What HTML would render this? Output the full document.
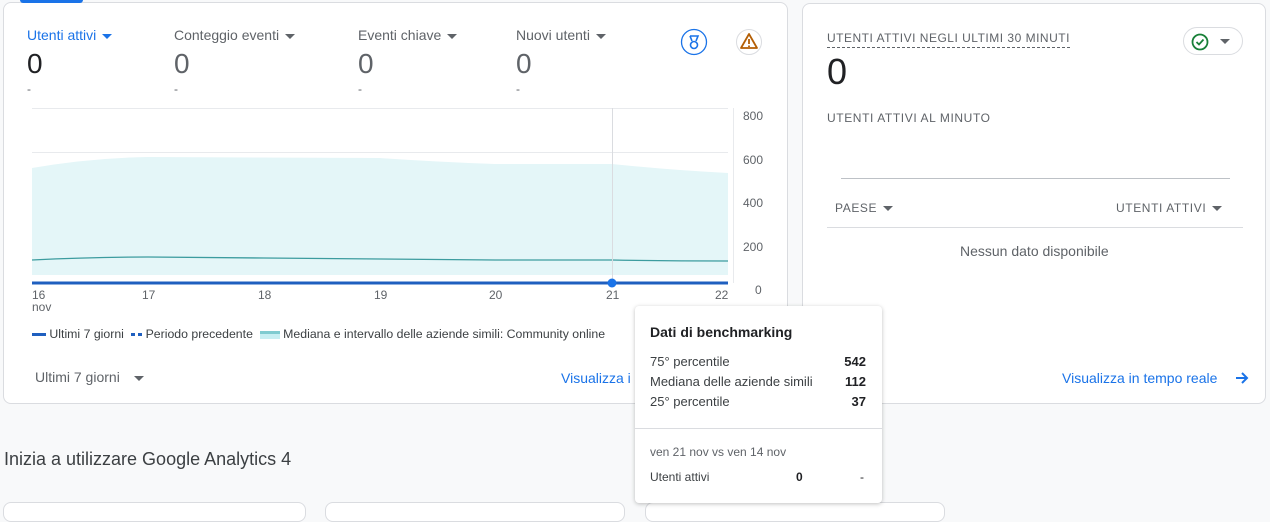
<!DOCTYPE html>
<html><head><meta charset="utf-8"><style>
*{margin:0;padding:0;box-sizing:border-box}
body{width:1270px;height:505px;background:#f8f9fa;font-family:"Liberation Sans",sans-serif;position:relative;overflow:hidden;color:#5f6368}
.a{position:absolute;white-space:nowrap}
.card{position:absolute;background:#fff;border:1px solid #dadce0;border-radius:8px}
.tri{display:inline-block;width:0;height:0;border-left:5px solid transparent;border-right:5px solid transparent;border-top:5px solid #5f6368;vertical-align:middle;margin-left:6px}
.m{font-size:14px;color:#5f6368}
.big{font-size:28px;color:#202124}
.cap{font-size:12px;letter-spacing:.6px;color:#5f6368}
</style></head><body>
<div class="card" style="left:3px;top:2px;width:785px;height:402px"></div>
<div class="a" style="left:20px;top:0;width:63px;height:3px;background:#1a73e8;border-radius:0 0 3px 3px"></div>
<div class="a m" style="left:27px;top:27px;color:#1a73e8">Utenti attivi<span class="tri" style="border-top-color:#1a73e8"></span></div>
<div class="a m" style="left:174px;top:27px">Conteggio eventi<span class="tri"></span></div>
<div class="a m" style="left:358px;top:27px">Eventi chiave<span class="tri"></span></div>
<div class="a m" style="left:516px;top:27px">Nuovi utenti<span class="tri"></span></div>
<div class="a big" style="left:27px;top:48px">0</div>
<div class="a big" style="left:174px;top:48px;color:#5f6368">0</div>
<div class="a big" style="left:358px;top:48px;color:#5f6368">0</div>
<div class="a big" style="left:516px;top:48px;color:#5f6368">0</div>
<div class="a" style="left:27px;top:82px;font-size:12px">-</div>
<div class="a" style="left:174px;top:82px;font-size:12px">-</div>
<div class="a" style="left:358px;top:82px;font-size:12px">-</div>
<div class="a" style="left:516px;top:82px;font-size:12px">-</div>
<svg class="a" style="left:680px;top:28px" width="28" height="28"><circle cx="14" cy="14" r="12.5" fill="#fff" stroke="#1a73e8" stroke-width="1.3"/><path d="M10 8h8l-2 5M10 8l2 5" stroke="#1a73e8" fill="none" stroke-width="1.6"/><circle cx="14" cy="17" r="3.5" stroke="#1a73e8" fill="none" stroke-width="1.6"/></svg>
<svg class="a" style="left:735px;top:28px" width="28" height="28"><circle cx="14" cy="14" r="12.5" fill="#fff" stroke="#dadce0"/><path d="M14 6L6 20h16z" fill="none" stroke="#b45f06" stroke-width="1.8" stroke-linejoin="round"/><path d="M14 11v5M14 17.5v1.5" stroke="#b45f06" stroke-width="1.8"/></svg>
<svg class="a" style="left:0;top:100px" width="790" height="200">
<g stroke="#e8eaed" stroke-width="1"><line x1="32" y1="8.5" x2="728" y2="8.5"/><line x1="32" y1="52.5" x2="728" y2="52.5"/><line x1="32" y1="95.5" x2="728" y2="95.5"/><line x1="32" y1="139.5" x2="728" y2="139.5"/><line x1="733.5" y1="8" x2="733.5" y2="183"/></g>
<path d="M32 68 Q90 58 148 57 L380 58 Q440 62 495 64 L612 64 Q670 70 728 73 L728 175 L32 175Z" fill="#e4f6f8"/>
<path d="M32 160 Q90 157 148 157 L264 158 L380 159 L495 160 L612 160 Q670 161 728 161" fill="none" stroke="#3c9c9f" stroke-width="1.3"/>
<line x1="612.5" y1="8" x2="612.5" y2="183" stroke="#dadce0"/>
<line x1="32" y1="183" x2="728" y2="183" stroke="#1f5fbf" stroke-width="3"/>
<circle cx="612" cy="183" r="4.5" fill="#1a73e8"/>
<g font-size="12" fill="#5f6368" font-family="Liberation Sans"><text x="743" y="20">800</text><text x="743" y="64">600</text><text x="743" y="107">400</text><text x="743" y="151">200</text><text x="755" y="194">0</text>
<text x="32" y="199">16</text><text x="142" y="199">17</text><text x="258" y="199">18</text><text x="374" y="199">19</text><text x="489" y="199">20</text><text x="606" y="199">21</text><text x="715" y="199">22</text></g>
</svg>
<div class="a" style="left:32px;top:300px;font-size:12px">nov</div>
<div class="a" style="left:32px;top:327px;font-size:12.3px;color:#3c4043"><span style="display:inline-block;width:14px;height:3px;background:#1f5fbf;vertical-align:middle"></span> Ultimi 7 giorni &nbsp;<span style="display:inline-block;width:4px;height:3px;background:#1f5fbf;vertical-align:middle"></span> <span style="display:inline-block;width:4px;height:3px;background:#1f5fbf;vertical-align:middle"></span> Periodo precedente &nbsp;<span style="display:inline-block;width:20px;height:8px;background:#c6eef2;border-top:3px solid #7fcbd0;vertical-align:middle"></span> Mediana e intervallo delle aziende simili: Community online</div>
<div class="a m" style="left:35px;top:369px">Ultimi 7 giorni <span class="tri" style="margin-left:10px"></span></div>
<div class="a" style="left:561px;top:370px;font-size:14px;color:#1a73e8">Visualizza i</div>

<div class="card" style="left:802px;top:3px;width:464px;height:401px"></div>
<div class="a cap" style="left:827px;top:31px;letter-spacing:.5px;border-bottom:1px dashed #5f6368;padding-bottom:2px">UTENTI ATTIVI NEGLI ULTIMI 30 MINUTI</div>
<div class="a" style="left:827px;top:51px;font-size:36px;color:#202124">0</div>
<div class="a cap" style="left:827px;top:111px">UTENTI ATTIVI AL MINUTO</div>
<div class="a" style="left:1183px;top:27px;width:60px;height:28px;border:1px solid #dadce0;border-radius:14px"></div>
<svg class="a" style="left:1190px;top:32px" width="20" height="20"><circle cx="10" cy="10" r="7.5" fill="none" stroke="#188038" stroke-width="1.8"/><path d="M6.5 10l2.5 2.5 4.5-5" fill="none" stroke="#188038" stroke-width="1.8"/></svg>
<span class="a tri" style="left:1214px;top:39px"></span>
<div class="a" style="left:841px;top:178px;width:389px;border-top:1px solid #bdc1c6"></div>
<div class="a cap" style="left:835px;top:201px">PAESE<span class="tri"></span></div>
<div class="a cap" style="left:1116px;top:201px">UTENTI ATTIVI<span class="tri"></span></div>
<div class="a" style="left:827px;top:227px;width:416px;border-top:1px solid #dadce0"></div>
<div class="a m" style="left:960px;top:243px">Nessun dato disponibile</div>
<div class="a" style="left:1062px;top:370px;font-size:14px;color:#1a73e8">Visualizza in tempo reale</div>
<svg class="a" style="left:1234px;top:370px" width="16" height="16"><path d="M2 8h11M8 3l5 5-5 5" fill="none" stroke="#1a73e8" stroke-width="2"/></svg>

<div class="a" style="left:4px;top:449px;font-size:18px;color:#3c4043">Inizia a utilizzare Google Analytics 4</div>
<div class="card" style="left:3px;top:502px;width:303px;height:20px"></div>
<div class="card" style="left:325px;top:502px;width:300px;height:20px"></div>
<div class="card" style="left:645px;top:502px;width:300px;height:20px"></div>

<div class="a" style="left:635px;top:306px;width:247px;height:197px;background:#fff;border-radius:4px;box-shadow:0 1px 4px rgba(0,0,0,.25)">
<div class="a" style="left:15px;top:18px;font-size:14px;font-weight:bold;color:#202124">Dati di benchmarking</div>
<div class="a" style="left:15px;top:48px;font-size:13px;color:#3c4043">75° percentile</div><div class="a" style="right:16px;top:48px;font-size:13px;font-weight:bold;color:#202124">542</div>
<div class="a" style="left:15px;top:68px;font-size:13px;color:#3c4043">Mediana delle aziende simili</div><div class="a" style="right:16px;top:68px;font-size:13px;font-weight:bold;color:#202124">112</div>
<div class="a" style="left:15px;top:88px;font-size:13px;color:#3c4043">25° percentile</div><div class="a" style="right:16px;top:88px;font-size:13px;font-weight:bold;color:#202124">37</div>
<div class="a" style="left:0;top:122px;width:247px;border-top:1px solid #dadce0"></div>
<div class="a" style="left:15px;top:139px;font-size:12px">ven 21 nov vs ven 14 nov</div>
<div class="a" style="left:15px;top:164px;font-size:12px;color:#3c4043">Utenti attivi</div>
<div class="a" style="left:161px;top:164px;font-size:12px;font-weight:bold;color:#202124">0</div>
<div class="a" style="left:225px;top:164px;font-size:12px;color:#202124">-</div>
</div>
</body></html>
